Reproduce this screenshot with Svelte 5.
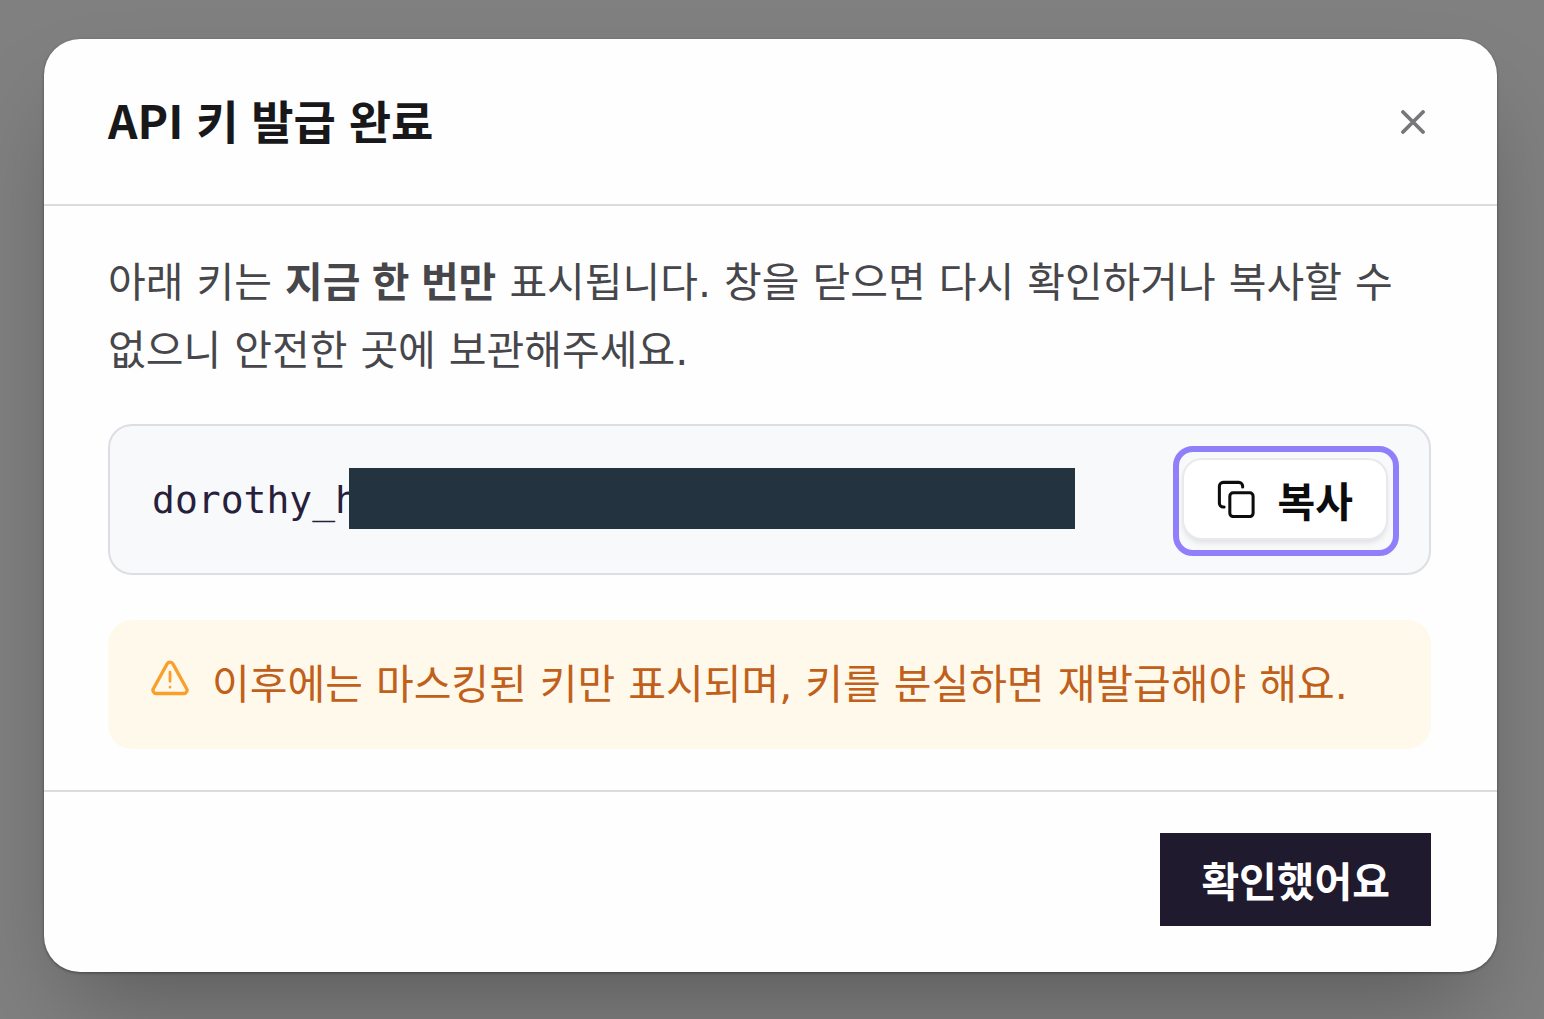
<script lang="ts">
  let open = $state(true);
  const keyPrefix = 'dorothy_h';

  function copyKey() {
    navigator.clipboard?.writeText(keyPrefix);
  }
  function close() {
    open = false;
  }
</script>

<div class="backdrop">
  {#if open}
    <div class="modal" role="dialog" aria-modal="true" aria-labelledby="modal-title">
      <header class="modal-header">
        <h1 id="modal-title"><span class="latin">API</span> 키 발급 완료</h1>
        <button class="close" type="button" aria-label="닫기" onclick={close}>
          <svg viewBox="0 0 24 24" width="24" height="24" fill="none" stroke="currentColor" stroke-width="3.8" stroke-linecap="round">
            <path d="M2 2 22 22M22 2 2 22" />
          </svg>
        </button>
      </header>

      <div class="modal-body">
        <p class="intro">
          아래 키는 <strong>지금 한 번만</strong> 표시됩니다. 창을 닫으면 다시 확인하거나 복사할 수 없으니 안전한 곳에 보관해주세요.
        </p>

        <div class="key-box">
          <div class="key">
            <code>{keyPrefix}</code>
            <span class="redaction"></span>
          </div>
          <div class="copy-ring">
            <button class="copy" type="button" onclick={copyKey}>
              <svg viewBox="0 0 40 40" width="38" height="38" fill="none" stroke="currentColor" stroke-width="3.2" stroke-linecap="round" stroke-linejoin="round">
                <rect x="13.5" y="13.5" width="24.5" height="25" rx="3.5" />
                <path d="M7.5 28.5H6.5a4 4 0 0 1-4-4V6.500a4 4 0 0 1 4-4H23a4 4 0 0 1 4 4v.8" />
              </svg>
              <span>복사</span>
            </button>
          </div>
        </div>

        <div class="warning" role="note">
          <svg viewBox="0 0 24 24" width="40" height="40" fill="none" stroke="currentColor" stroke-width="2" stroke-linecap="round" stroke-linejoin="round">
            <path d="m21.73 18-8-14.500a2 2 0 0 0-3.460 0l-8 14.500A2 2 0 0 0 4 21.300h16a2 2 0 0 0 1.730-3.300" />
            <path d="M12 8.500v5.500M12 17.500h.01" stroke-width="1.700" />
          </svg>
          <span>이후에는 마스킹된 키만 표시되며, 키를 분실하면 재발급해야 해요.</span>
        </div>
      </div>

      <footer class="modal-footer">
        <button class="confirm" type="button" onclick={close}>확인했어요</button>
      </footer>
    </div>
  {/if}
</div>

<style>
  :global(body) {
    margin: 0;
    background: #808080;
  }
  .backdrop {
    box-sizing: border-box;
    min-height: 100vh;
    padding: 39px 47px 47px 44px;
    overflow: hidden;
    background: #808080;
    font-family: 'DejaVu Sans', 'Noto Sans CJK KR', sans-serif;
    word-break: keep-all;
  }
  .modal {
    background: #fefefe;
    border-radius: 36px;
    box-shadow:
      0 1px 3px rgba(0, 0, 0, 0.4),
      0 50px 100px -24px rgba(0, 0, 0, 0.3);
  }
  button {
    font-family: 'Noto Sans CJK KR', sans-serif;
    border: 0;
    margin: 0;
    cursor: pointer;
  }
  svg {
    display: block;
    flex: none;
  }
  .modal-header {
    display: flex;
    align-items: center;
    justify-content: space-between;
    padding: 49px 66px 49px 64px;
    border-bottom: 2px solid #dcdcde;
  }
  h1 {
    margin: 0;
    padding-top: 3px;
    font-family: 'Liberation Sans', 'Noto Sans CJK KR', sans-serif;
    font-size: 46px;
    line-height: 64px;
    font-weight: 700;
    color: #18181b;
  }
  .latin {
    font-family: 'Noto Sans CJK KR', sans-serif;
    line-height: 1;
  }
  .close {
    padding: 6px;
    background: none;
    color: #77777b;
  }
  .modal-body {
    padding: 43px 66px 41px 64px;
  }
  .intro {
    margin: 0 0 39px;
    font-size: 41px;
    line-height: 68px;
    color: #46464b;
  }
  .intro strong {
    font-family: 'Liberation Sans', 'Noto Sans CJK KR', sans-serif;
    font-weight: 700;
    line-height: 1;
  }
  .key-box {
    display: flex;
    align-items: center;
    justify-content: space-between;
    padding: 20px 30px 17px 42px;
    border: 2px solid #dcdee4;
    border-radius: 24px;
    background: #f7f9fb;
  }
  .key {
    display: flex;
    align-items: center;
    padding-bottom: 5px;
  }
  .key code {
    width: 206px;
    padding-top: 3px;
    font-family: 'DejaVu Sans Mono', monospace;
    font-size: 38px;
    line-height: 60px;
    color: #28203a;
  }
  .redaction {
    width: 726px;
    height: 61px;
    margin-left: -9px;
    background: #233440;
  }
  .copy-ring {
    padding: 8px 7px 12px 5px;
    border: 6px solid #8f7ffb;
    border-radius: 20px;
  }
  .copy {
    display: flex;
    align-items: center;
    gap: 23px;
    padding: 9px 33px;
    border-radius: 18px;
    background: #fff;
    box-shadow:
      0 0 0 2px #e9e9ec,
      0 4px 6px rgba(0, 0, 0, 0.12);
    font-size: 41px;
    line-height: 60px;
    font-weight: 700;
    color: #0c0c0e;
  }
  .warning {
    display: flex;
    align-items: flex-start;
    gap: 22px;
    margin-top: 45px;
    padding: 35px 42px 34px;
    border-radius: 24px;
    background: #fff9eb;
    font-size: 41px;
    line-height: 60px;
    color: #c0601a;
  }
  .warning svg {
    margin-top: 3px;
    color: #f9a02c;
  }
  .modal-footer {
    display: flex;
    justify-content: flex-end;
    padding: 41px 66px 46px 64px;
    border-top: 2px solid #dcdcde;
  }
  .confirm {
    padding: 16px 41px;
    background: #1f1a2d;
    font-size: 41px;
    line-height: 61px;
    font-weight: 700;
    color: #fff;
  }
</style>
